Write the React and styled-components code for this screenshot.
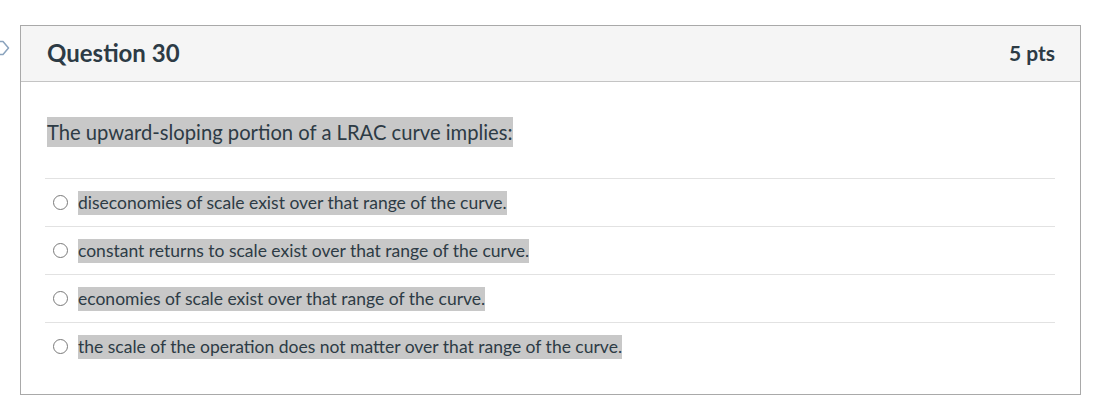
import React from "react";
import styled, { createGlobalStyle } from "styled-components";

const Global = createGlobalStyle`
  html, body { margin: 0; padding: 0; background: #fff; }
  body { font-family: Lato, "Liberation Sans", sans-serif; color: #2d3b45; }
`;

const Page = styled.div`
  position: relative;
  padding: 25px 38px 0 20px;
  width: 1061px;
`;

const Marker = styled.svg`
  position: absolute;
  left: 0;
  top: 40px;
`;

const Card = styled.div`
  border: 1px solid #a9a9a9;
  height: 370px;
  box-sizing: border-box;
`;

const Header = styled.div`
  display: flex;
  justify-content: space-between;
  align-items: center;
  height: 56px;
  padding: 0 25px 3px 26px;
  box-sizing: border-box;
  background: #f5f5f5;
  border-bottom: 1px solid #c4c4c4;
`;

const Title = styled.h2`
  margin: 0;
  font-size: 24px;
  font-weight: 700;
  color: #2d3b45;
`;

const Points = styled.span`
  font-size: 21px;
  font-weight: 700;
  color: #2d3b45;
`;

const Body = styled.div`
  padding: 35px 25px 0 24px;
`;

const Highlight = styled.span`
  display: inline-block;
  background: #c8c8c8;
  font-size: ${(p) => p.$size}px;
  line-height: ${(p) => p.$lh}px;
  color: #2d3b45;
`;

const Prompt = styled.div`
  padding-left: 2px;
  margin-bottom: 31px;
`;

const Answers = styled.div`
  display: flex;
  flex-direction: column;
`;

const Answer = styled.label`
  display: flex;
  align-items: center;
  gap: 10px;
  height: 47px;
  padding: 0 0 0 8px;
  border-top: 1px solid #e2e2e2;
`;

const Radio = styled.span`
  width: 13px;
  height: 13px;
  border: 1px solid #7a7a7a;
  border-radius: 50%;
  background: #fff;
  flex-shrink: 0;
`;

const answers = [
  "diseconomies of scale exist over that range of the curve.",
  "constant returns to scale exist over that range of the curve.",
  "economies of scale exist over that range of the curve.",
  "the scale of the operation does not matter over that range of the curve.",
];

export default function App() {
  return (
    <>
      <Global />
      <Page>
        <Marker width="10" height="18" viewBox="0 0 10 18">
          <path d="M-5 1.5 H3 L8.5 8 L3 14.5 H-5" fill="none" stroke="#8aa3bd" strokeWidth="1.5" strokeLinejoin="round" />
        </Marker>
        <Card>
          <Header>
            <Title>Question 30</Title>
            <Points>5 pts</Points>
          </Header>
          <Body>
            <Prompt>
              <Highlight $size={20.2} $lh={30}>The upward-sloping portion of a LRAC curve implies:</Highlight>
            </Prompt>
            <Answers>
              {answers.map((a) => (
                <Answer key={a}>
                  <Radio />
                  <Highlight $size={17.5} $lh={24}>{a}</Highlight>
                </Answer>
              ))}
            </Answers>
          </Body>
        </Card>
      </Page>
    </>
  );
}
